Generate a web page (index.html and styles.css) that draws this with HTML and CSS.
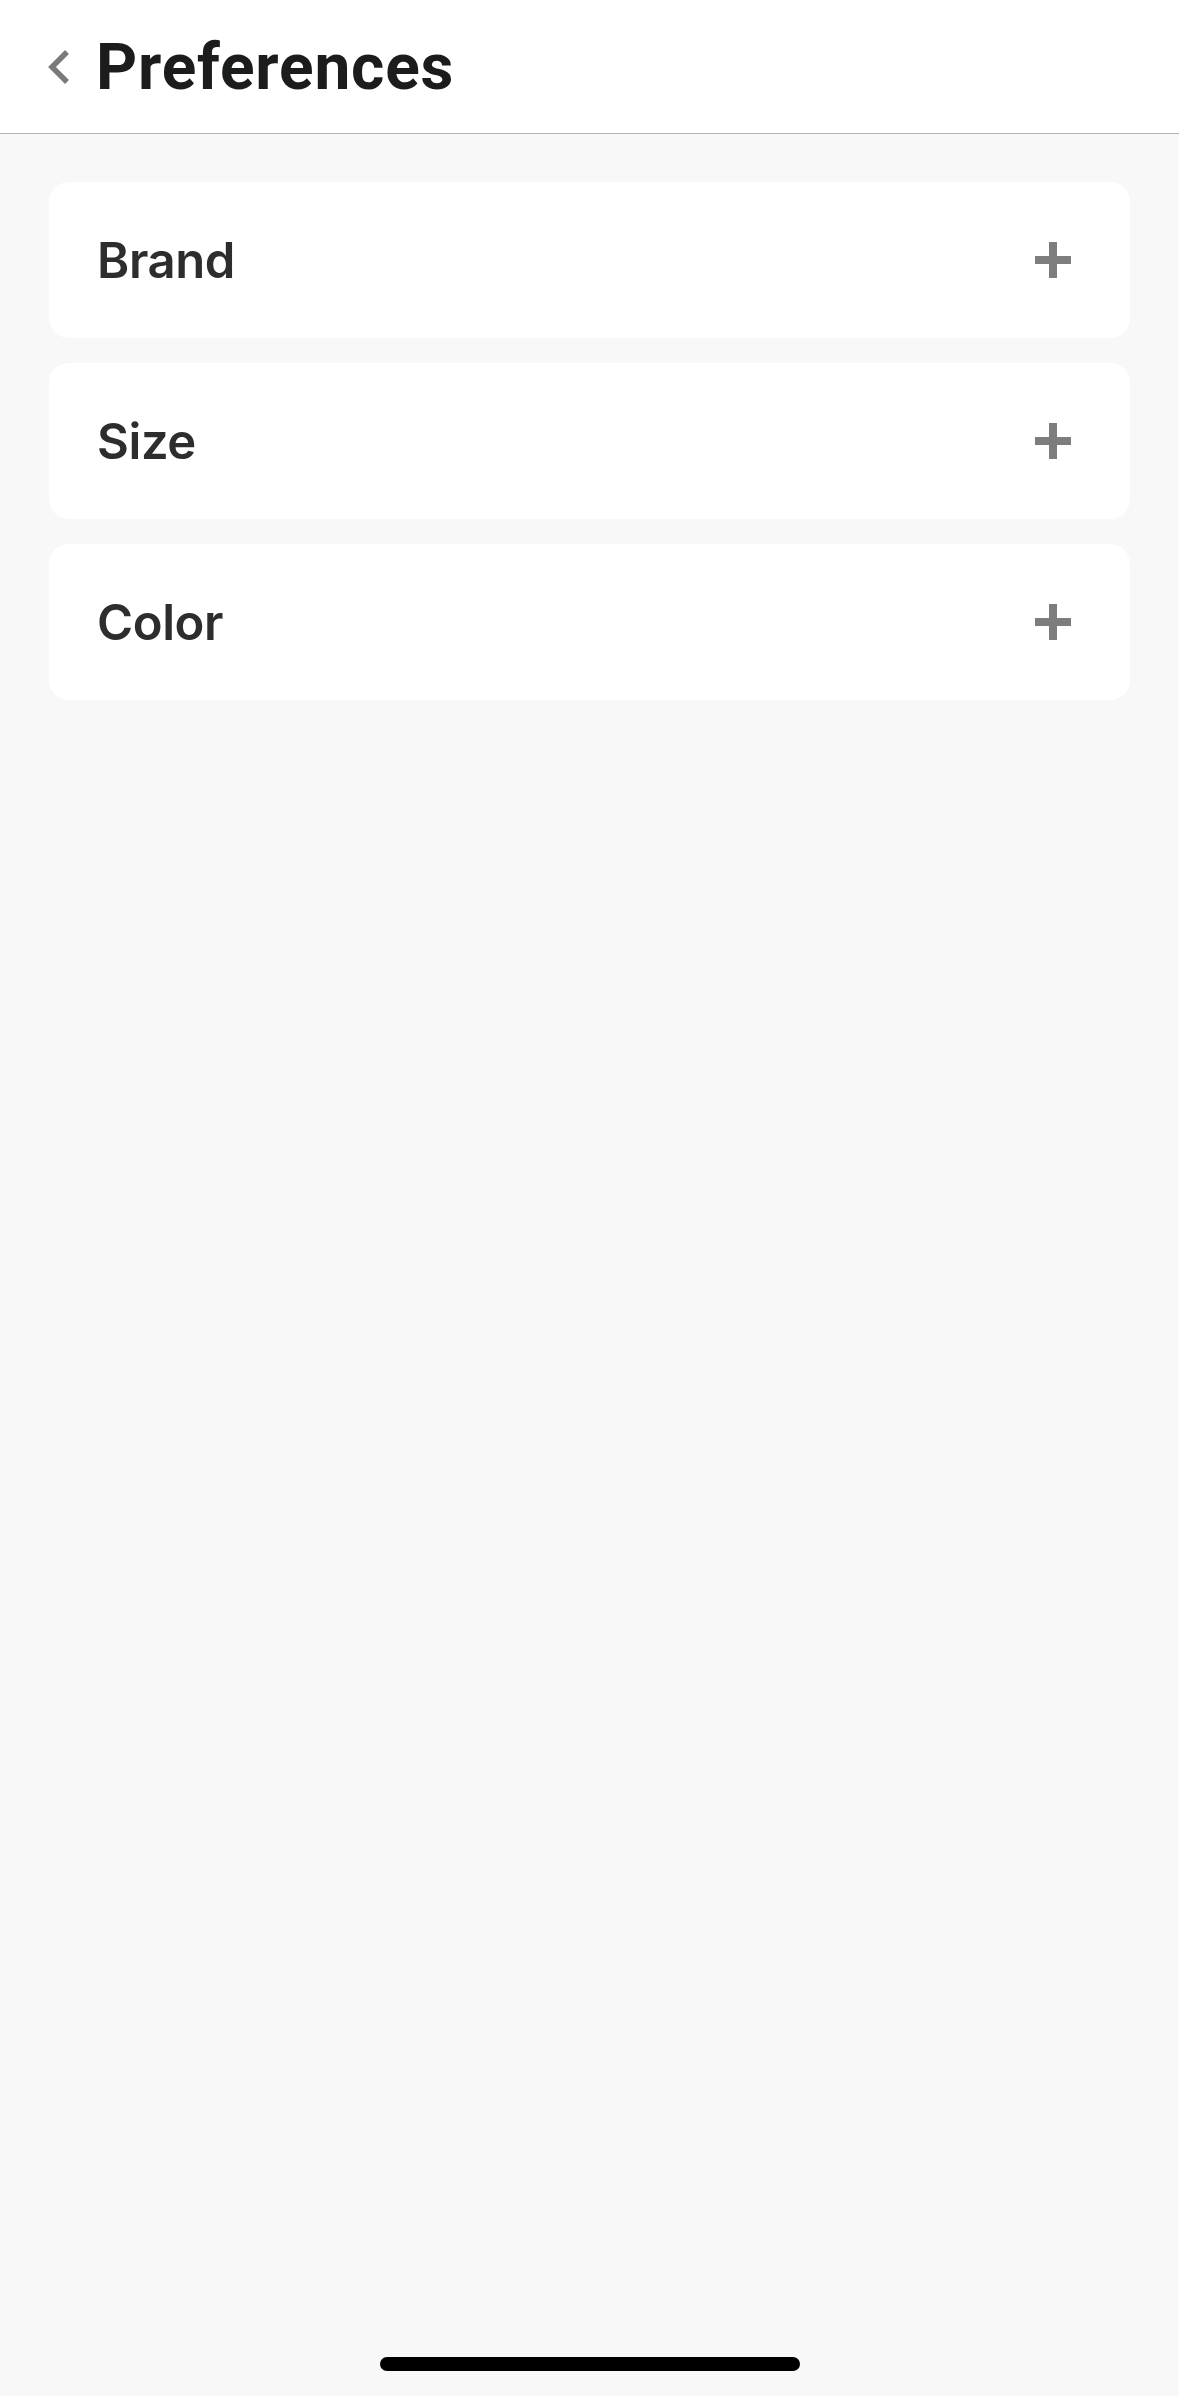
FILE: index.html
```html
<!DOCTYPE html>
<html lang="en">
<head>
<meta charset="utf-8">
<title>Preferences</title>
<link rel="stylesheet" href="styles.css">
</head>
<body>
<div class="screen">
  <header class="topbar">
    <button class="back" aria-label="Back">
      <svg width="22" height="34" viewBox="0 0 22 34"><polyline points="19,2 4,17 19,32" fill="none" stroke="#7a7a7a" stroke-width="5.5"/></svg>
    </button>
    <h1 class="title">Preferences</h1>
  </header>
  <main class="list">
    <div class="card"><span class="label">Brand</span><span class="plus" aria-hidden="true"></span></div>
    <div class="card"><span class="label">Size</span><span class="plus" aria-hidden="true"></span></div>
    <div class="card"><span class="label">Color</span><span class="plus" aria-hidden="true"></span></div>
  </main>
  <div class="home-indicator"></div>
</div>
</body>
</html>
```
FILE: styles.css
```css
html, body {
  margin: 0;
  padding: 0;
  background: #f8f8f8;
}
.screen {
  width: 1179px;
  height: 2396px;
  display: flex;
  flex-direction: column;
  background: #f8f8f8;
  font-family: Roboto, "Liberation Sans", sans-serif;
}
.topbar {
  height: 133px;
  background: #ffffff;
  border-bottom: 1px solid #b4b4b4;
  display: flex;
  align-items: center;
  padding-left: 48px;
  box-sizing: content-box;
}
.back {
  border: 0;
  background: none;
  padding: 0;
  width: 24px;
  height: 34px;
  display: flex;
  align-items: center;
  margin-right: 24px;
}
.title {
  margin: 0;
  font-size: 64px;
  font-weight: 700;
  color: #1b1d1c;
  letter-spacing: 0.8px;
  line-height: 1;
  position: relative;
  top: 1px;
}
.list {
  padding: 48px 49px 0;
  display: flex;
  flex-direction: column;
  gap: 25px;
}
.card {
  height: 156px;
  background: #ffffff;
  border-radius: 20px;
  display: flex;
  align-items: center;
  justify-content: space-between;
  padding: 0 59px 0 48px;
}
.label {
  font-family: Inter, Roboto, sans-serif;
  font-size: 49px;
  font-weight: 600;
  color: #2d2d2d;
  line-height: 1;
  letter-spacing: -0.4px;
}
.plus {
  width: 36px;
  height: 36px;
  position: relative;
}
.plus::before,
.plus::after {
  content: "";
  position: absolute;
  background: #7d7d7d;
}
.plus::before {
  left: 0;
  right: 0;
  top: 14px;
  height: 8px;
}
.plus::after {
  top: 0;
  bottom: 0;
  left: 14px;
  width: 8px;
}
.home-indicator {
  margin: auto auto 25px;
  width: 420px;
  height: 14px;
  border-radius: 7px;
  background: #000000;
}
```
